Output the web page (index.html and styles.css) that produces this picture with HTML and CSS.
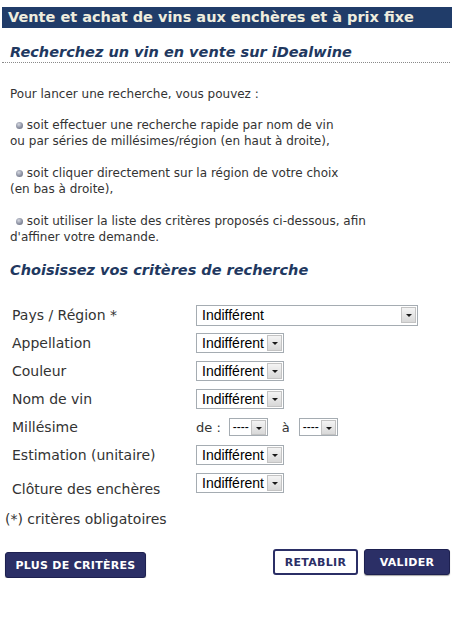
FILE: index.html
```html
<!DOCTYPE html>
<html lang="fr">
<head>
<meta charset="utf-8">
<title>Recherche iDealwine</title>
<link rel="stylesheet" href="styles.css">
</head>
<body>
<div class="page">
  <h1 class="banner">Vente et achat de vins aux enchères et à prix fixe</h1>
  <h2 class="section-title dotted">Recherchez un vin en vente sur iDealwine</h2>

  <div class="intro">
    <p>Pour lancer une recherche, vous pouvez :</p>
    <p><span class="dot"></span> soit effectuer une recherche rapide par nom de vin<br>ou par séries de millésimes/région (en haut à droite),</p>
    <p><span class="dot"></span> soit cliquer directement sur la région de votre choix<br>(en bas à droite),</p>
    <p><span class="dot"></span> soit utiliser la liste des critères proposés ci-dessous, afin<br>d'affiner votre demande.</p>
  </div>

  <h2 class="section-title criteria-title">Choisissez vos critères de recherche</h2>

  <div class="criteria">
    <div class="label">Pays / Région *</div>
    <div class="control"><span class="select wide"><span class="value">Indifférent</span><span class="arrow"></span></span></div>

    <div class="label">Appellation</div>
    <div class="control"><span class="select"><span class="value">Indifférent</span><span class="arrow"></span></span></div>

    <div class="label">Couleur</div>
    <div class="control"><span class="select"><span class="value">Indifférent</span><span class="arrow"></span></span></div>

    <div class="label">Nom de vin</div>
    <div class="control"><span class="select"><span class="value">Indifférent</span><span class="arrow"></span></span></div>

    <div class="label">Millésime</div>
    <div class="control range">
      <span class="range-text">de :</span>
      <span class="select year"><span class="value">----</span><span class="arrow"></span></span>
      <span class="range-text to">à</span>
      <span class="select year"><span class="value">----</span><span class="arrow"></span></span>
    </div>

    <div class="label">Estimation (unitaire)</div>
    <div class="control"><span class="select"><span class="value">Indifférent</span><span class="arrow"></span></span></div>

    <div class="label low">Clôture des enchères</div>
    <div class="control"><span class="select"><span class="value">Indifférent</span><span class="arrow"></span></span></div>
  </div>

  <p class="note">(*) critères obligatoires</p>

  <div class="actions">
    <a class="btn btn-dark btn-more" href="#">PLUS DE CRITÈRES</a>
    <div class="actions-right">
      <a class="btn btn-light" href="#">RETABLIR</a>
      <a class="btn btn-dark" href="#">VALIDER</a>
    </div>
  </div>
</div>
</body>
</html>
```

FILE: styles.css
```css
html, body {
  margin: 0;
  padding: 0;
  background: #ffffff;
}

body {
  font-family: Verdana, "DejaVu Sans", sans-serif;
  color: #333333;
}

.page {
  width: 452px;
  padding-top: 7px;
}

.banner {
  margin: 0 0 0 2px;
  width: 444px;
  height: 21px;
  padding-left: 6px;
  background: #203c69;
  color: #efedde;
  font-size: 14.5px;
  font-weight: bold;
  line-height: 21px;
  white-space: nowrap;
}

.section-title {
  margin: 0;
  padding-left: 10px;
  color: #21385f;
  font-size: 14.5px;
  font-weight: bold;
  font-style: italic;
  line-height: 18px;
  white-space: nowrap;
}

.section-title.dotted {
  margin: 15px 0 0 2px;
  padding: 0 0 1px 8px;
  width: 440px;
  border-bottom: 1px dotted #8a8a8a;
}

.intro {
  padding: 0 10px;
  margin-top: 23px;
  font-size: 12px;
  line-height: 16px;
}

.intro p {
  margin: 0 0 16px 0;
}

.intro p:first-child {
  margin-bottom: 15px;
}

.intro p:last-child {
  margin-bottom: 0;
}

.dot {
  display: inline-block;
  width: 7px;
  height: 7px;
  margin-left: 6px;
  border-radius: 50%;
  background: radial-gradient(circle at 40% 35%, #d4d7e0 0%, #8c91a2 55%, #5d6272 100%);
  vertical-align: 0;
}

.criteria-title {
  margin-top: 16px;
}

.criteria {
  display: grid;
  grid-template-columns: 184px 1fr;
  grid-auto-rows: 28px;
  margin: 22px 0 0 12px;
  font-size: 14px;
  align-items: center;
}

.label {
  line-height: 16px;
}

.label.low {
  align-self: end;
}

.control {
  display: flex;
  align-items: center;
}

.select {
  display: inline-flex;
  align-items: center;
  justify-content: space-between;
  box-sizing: border-box;
  width: 88px;
  height: 20px;
  padding: 0 1px 0 5px;
  border: 1px solid #a5acb2;
  background: #ffffff;
  font-family: "Liberation Sans", Arial, sans-serif;
  font-size: 14px;
  color: #000000;
}

.select.wide {
  width: 222px;
  height: 21px;
}

.select.year {
  width: 39px;
  height: 18px;
  padding-left: 3px;
  font-size: 12px;
}

.arrow {
  position: relative;
  box-sizing: border-box;
  width: 15px;
  height: 16px;
  border: 1px solid #c3c3c3;
  background: linear-gradient(#f4f4f4, #d8d8d8);
}

.arrow::after {
  content: "";
  position: absolute;
  left: 4px;
  top: 6px;
  border-left: 3px solid transparent;
  border-right: 3px solid transparent;
  border-top: 3px solid #1a1a1a;
}

.select.year .arrow {
  height: 15px;
}

.range-text {
  font-size: 13px;
  margin-right: 8px;
}

.range-text.to {
  margin-left: 14px;
  margin-right: 9px;
}

.note {
  margin: 14px 0 0 5px;
  font-size: 14px;
  line-height: 16px;
}

.actions {
  display: flex;
  justify-content: space-between;
  align-items: flex-start;
  margin: 25px 0 0 5px;
  width: 445px;
}

.actions-right {
  display: flex;
  gap: 6px;
  margin-top: -3px;
}

.btn {
  display: inline-flex;
  align-items: center;
  justify-content: center;
  box-sizing: border-box;
  height: 26px;
  border-radius: 3px;
  font-family: "DejaVu Sans", sans-serif;
  font-size: 11px;
  font-weight: bold;
  text-decoration: none;
  letter-spacing: 0.3px;
}

.btn-dark {
  background: #2b2f66;
  color: #ffffff;
  border: 1px solid #1d2050;
  box-shadow: 0 1px 1px rgba(0,0,0,0.35);
  width: 86px;
}

.btn-more {
  width: 141px;
}

.btn-light {
  background: #ffffff;
  color: #2b2f66;
  border: 2px solid #2b2f66;
  width: 85px;
}
```
